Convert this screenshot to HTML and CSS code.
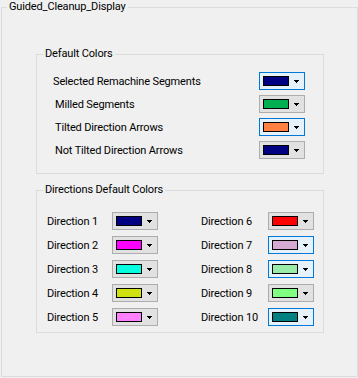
FILE: index.html
```html
<!DOCTYPE html>
<html>
<head>
<meta charset="utf-8">
<link rel="stylesheet" href="styles.css">
</head>
<body>
<fieldset class="group outer">
  <legend>Guided_Cleanup_Display</legend>
  <div class="outer-body">
    <fieldset class="group inner defaults">
      <legend>Default Colors</legend>
      <div class="default-rows">
        <span class="label">Selected Remachine Segments</span>
        <button class="color-btn focused"><span class="swatch" style="background:#000080"></span><svg class="arrow" width="5" height="3" viewBox="0 0 5 3"><rect x="0" y="0" width="5" height="1"/><rect x="1" y="1" width="3" height="1"/><rect x="2" y="2" width="1" height="1"/></svg></button>
        <span class="label shift">Milled Segments</span>
        <button class="color-btn"><span class="swatch" style="background:#00b050"></span><svg class="arrow" width="5" height="3" viewBox="0 0 5 3"><rect x="0" y="0" width="5" height="1"/><rect x="1" y="1" width="3" height="1"/><rect x="2" y="2" width="1" height="1"/></svg></button>
        <span class="label shift">Tilted Direction Arrows</span>
        <button class="color-btn focused"><span class="swatch" style="background:#ff8040"></span><svg class="arrow" width="5" height="3" viewBox="0 0 5 3"><rect x="0" y="0" width="5" height="1"/><rect x="1" y="1" width="3" height="1"/><rect x="2" y="2" width="1" height="1"/></svg></button>
        <span class="label shift">Not Tilted Direction Arrows</span>
        <button class="color-btn"><span class="swatch" style="background:#000080"></span><svg class="arrow" width="5" height="3" viewBox="0 0 5 3"><rect x="0" y="0" width="5" height="1"/><rect x="1" y="1" width="3" height="1"/><rect x="2" y="2" width="1" height="1"/></svg></button>
      </div>
    </fieldset>
    <fieldset class="group inner directions">
      <legend>Directions Default Colors</legend>
      <div class="direction-rows">
        <span class="label">Direction 1</span>
        <button class="color-btn"><span class="swatch" style="background:#000080"></span><svg class="arrow" width="5" height="3" viewBox="0 0 5 3"><rect x="0" y="0" width="5" height="1"/><rect x="1" y="1" width="3" height="1"/><rect x="2" y="2" width="1" height="1"/></svg></button>
        <span class="label col2">Direction 6</span>
        <button class="color-btn"><span class="swatch" style="background:#ff0000"></span><svg class="arrow" width="5" height="3" viewBox="0 0 5 3"><rect x="0" y="0" width="5" height="1"/><rect x="1" y="1" width="3" height="1"/><rect x="2" y="2" width="1" height="1"/></svg></button>

        <span class="label">Direction 2</span>
        <button class="color-btn"><span class="swatch" style="background:#ff00ff"></span><svg class="arrow" width="5" height="3" viewBox="0 0 5 3"><rect x="0" y="0" width="5" height="1"/><rect x="1" y="1" width="3" height="1"/><rect x="2" y="2" width="1" height="1"/></svg></button>
        <span class="label col2">Direction 7</span>
        <button class="color-btn focused"><span class="swatch" style="background:#d4aad4"></span><svg class="arrow" width="5" height="3" viewBox="0 0 5 3"><rect x="0" y="0" width="5" height="1"/><rect x="1" y="1" width="3" height="1"/><rect x="2" y="2" width="1" height="1"/></svg></button>

        <span class="label">Direction 3</span>
        <button class="color-btn"><span class="swatch" style="background:#00ffe0"></span><svg class="arrow" width="5" height="3" viewBox="0 0 5 3"><rect x="0" y="0" width="5" height="1"/><rect x="1" y="1" width="3" height="1"/><rect x="2" y="2" width="1" height="1"/></svg></button>
        <span class="label col2">Direction 8</span>
        <button class="color-btn focused"><span class="swatch" style="background:#98eca8"></span><svg class="arrow" width="5" height="3" viewBox="0 0 5 3"><rect x="0" y="0" width="5" height="1"/><rect x="1" y="1" width="3" height="1"/><rect x="2" y="2" width="1" height="1"/></svg></button>

        <span class="label">Direction 4</span>
        <button class="color-btn"><span class="swatch" style="background:#d0e010"></span><svg class="arrow" width="5" height="3" viewBox="0 0 5 3"><rect x="0" y="0" width="5" height="1"/><rect x="1" y="1" width="3" height="1"/><rect x="2" y="2" width="1" height="1"/></svg></button>
        <span class="label col2">Direction 9</span>
        <button class="color-btn"><span class="swatch" style="background:#80ff80"></span><svg class="arrow" width="5" height="3" viewBox="0 0 5 3"><rect x="0" y="0" width="5" height="1"/><rect x="1" y="1" width="3" height="1"/><rect x="2" y="2" width="1" height="1"/></svg></button>

        <span class="label">Direction 5</span>
        <button class="color-btn"><span class="swatch" style="background:#ff80ff"></span><svg class="arrow" width="5" height="3" viewBox="0 0 5 3"><rect x="0" y="0" width="5" height="1"/><rect x="1" y="1" width="3" height="1"/><rect x="2" y="2" width="1" height="1"/></svg></button>
        <span class="label col2">Direction 10</span>
        <button class="color-btn focused"><span class="swatch" style="background:#008080"></span><svg class="arrow" width="5" height="3" viewBox="0 0 5 3"><rect x="0" y="0" width="5" height="1"/><rect x="1" y="1" width="3" height="1"/><rect x="2" y="2" width="1" height="1"/></svg></button>
      </div>
    </fieldset>
  </div>
</fieldset>
</body>
</html>
```

FILE: styles.css
```css
html, body {
  margin: 0;
  padding: 0;
  background: #f0f0f0;
}

body {
  width: 358px;
  height: 378px;
  overflow: hidden;
  font-family: Roboto, "Liberation Sans", sans-serif;
  font-size: 11px;
  line-height: 14px;
  letter-spacing: -0.15px;
  color: #000;
}

.group {
  border: 1px solid #dcdcdc;
  margin: 0;
  padding: 0;
  min-width: 0;
  box-sizing: border-box;
}

.group > legend {
  padding: 0 2px;
  line-height: 14px;
  font-size: 11px;
}

.outer {
  margin-left: 1px;
  width: 357px;
  height: 377px;
}

.outer > legend {
  margin-left: 5px;
}

.outer-body {
  padding: 33px 0 0 34px;
  display: flex;
  flex-direction: column;
  gap: 9px;
}

.inner {
  width: 288px;
}

.inner > legend {
  margin-left: 6px;
}

.default-rows {
  display: grid;
  grid-template-columns: 1fr 46px;
  row-gap: 5px;
  align-items: center;
  padding: 11px 18px 14px 16px;
}

.direction-rows {
  display: grid;
  grid-template-columns: 65px 46px 43px 67px 46px;
  row-gap: 6px;
  align-items: center;
  padding: 15px 9px 6px 10px;
}

.direction-rows .col2 {
  grid-column: 4;
}

.label {
  white-space: nowrap;
  padding-top: 2px;
}

.label.shift {
  padding-left: 2px;
}

.color-btn {
  box-sizing: border-box;
  width: 46px;
  height: 18px;
  margin: 0;
  padding: 0 0 0 3px;
  border: 1px solid #adadad;
  background: #e1e1e1;
  display: flex;
  align-items: center;
  gap: 5px;
  font: inherit;
}

.color-btn.focused {
  border-color: #0078d7;
  background: #e5f1fb;
}

.swatch {
  display: block;
  box-sizing: border-box;
  width: 26px;
  height: 10px;
  border: 1px solid #000;
}

.arrow {
  display: block;
  fill: #000;
  shape-rendering: crispEdges;
  margin-top: 1px;
}
```
